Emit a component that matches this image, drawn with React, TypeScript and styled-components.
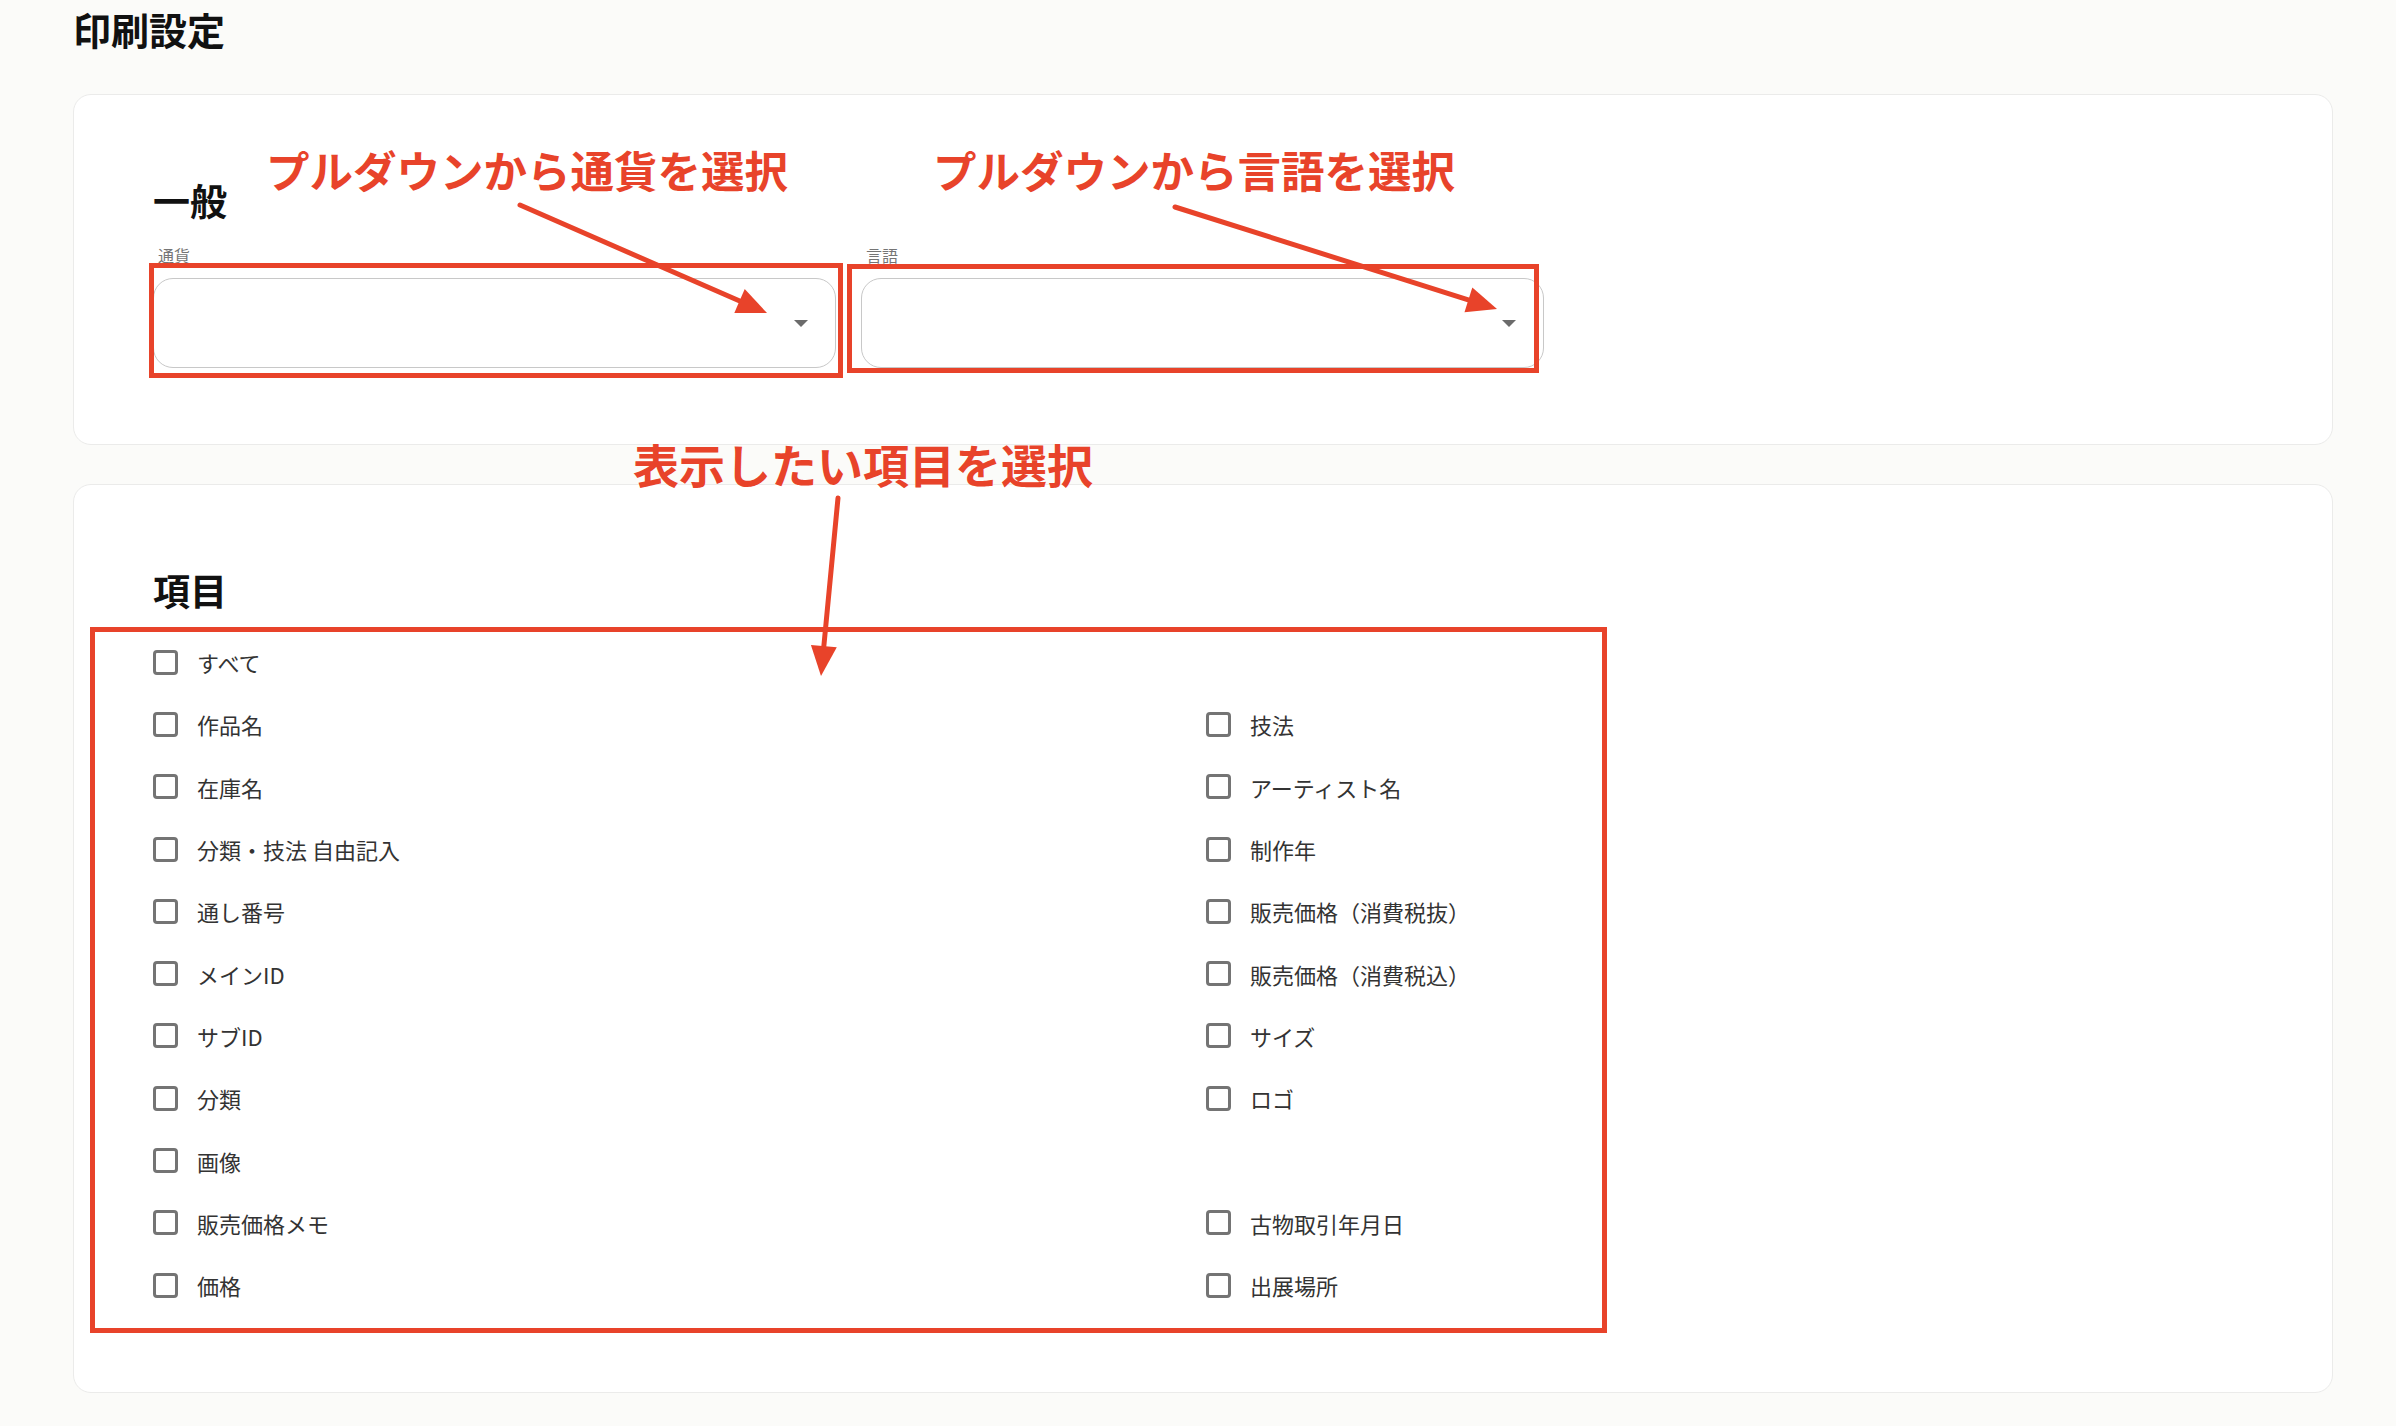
import React from "react";
import styled, { createGlobalStyle } from "styled-components";

const GlobalStyle = createGlobalStyle`
  html, body {
    margin: 0;
    padding: 0;
    background-color: #fbfbf9;
  }

  body {
    font-family: "Noto Sans CJK JP", "Noto Sans", sans-serif;
    color: #1a1a1a;
  }
`;

const Page = styled.div`
  position: relative;
  width: 100%;
  min-height: 1426px;
  box-sizing: border-box;
  padding: 7px 63px 0px 73px;
`;

const PageTitle = styled.h1`
  margin: 0px 0px 43px;
  font-size: 38px;
  line-height: 44px;
  font-weight: 700;
  color: #111111;
`;

const Card = styled.section`
  background-color: #ffffff;
  border: 1px solid #ebebea;
  border-radius: 18px;
  box-sizing: border-box;
  padding: 83px 79px 76px;
  margin-bottom: 39px;
`;

const SectionTitle = styled.h2`
  margin: 0px;
  font-size: 37px;
  line-height: 44px;
  font-weight: 700;
  color: #111111;
`;

const FieldRow = styled.div`
  display: flex;
  gap: 25px;
  margin-top: 23px;
`;

const Field = styled.div`
  width: 683px;
  display: flex;
  flex-direction: column;
`;

const FieldLabel = styled.label`
  font-size: 16px;
  line-height: 20px;
  color: #757575;
  padding-left: 5px;
  margin-bottom: 13px;
`;

const SelectBox = styled.div`
  height: 90px;
  border: 1px solid #c8c8c8;
  border-radius: 20px;
  box-sizing: border-box;
  display: flex;
  align-items: center;
  justify-content: flex-end;
  padding-right: 27px;
  background-color: #ffffff;
`;

const Caret = styled.span`
  width: 0px;
  height: 0px;
  border-left: 7px solid transparent;
  border-right: 7px solid transparent;
  border-top: 7px solid #6b6b6b;
`;

const CheckGrid = styled.div`
  display: grid;
  grid-template-columns: 1053px 1fr;
  grid-auto-rows: 62.3px;
  margin-top: 19px;
`;

const CheckItem = styled.label`
  display: flex;
  align-items: center;
  gap: 19px;
  font-size: 22px;
  color: #333333;
`;

const CheckBox = styled.span`
  width: 25px;
  height: 25px;
  box-sizing: border-box;
  border: 3px solid #747474;
  border-radius: 4px;
  flex-shrink: 0;
`;

const Overlay = styled.div`
  position: absolute;
  inset: 0px;
  pointer-events: none;
`;

const MarkBox = styled.div<{ $x: number; $y: number; $w: number; $h: number }>`
  position: absolute;
  left: ${(p) => p.$x}px;
  top: ${(p) => p.$y}px;
  width: ${(p) => p.$w}px;
  height: ${(p) => p.$h}px;
  box-sizing: border-box;
  border: 5px solid #e8432a;
`;

const MarkText = styled.div<{ $x: number; $y: number; $size: number }>`
  position: absolute;
  left: ${(p) => p.$x}px;
  top: ${(p) => p.$y}px;
  font-size: ${(p) => p.$size}px;
  line-height: 1.1;
  font-weight: 700;
  color: #e8432a;
  white-space: nowrap;
  text-shadow: 0px 0px 2px #ffffff;
`;

const ArrowLayer = styled.svg`
  position: absolute;
  left: 0px;
  top: 0px;
`;

type Arrow = { x1: number; y1: number; x2: number; y2: number };

const arrows: Arrow[] = [
  { x1: 520, y1: 205, x2: 767, y2: 313 },
  { x1: 1175, y1: 207, x2: 1497, y2: 309 },
  { x1: 838, y1: 498, x2: 821, y2: 676 },
];

const ArrowShape = ({ x1, y1, x2, y2 }: Arrow) => {
  const dx = x2 - x1;
  const dy = y2 - y1;
  const len = Math.sqrt(dx * dx + dy * dy);
  const ux = dx / len;
  const uy = dy / len;
  const headLen = 30;
  const headHalf = 13;
  const bx = x2 - ux * headLen;
  const by = y2 - uy * headLen;
  const px = -uy * headHalf;
  const py = ux * headHalf;
  const points = `${x2},${y2} ${bx + px},${by + py} ${bx - px},${by - py}`;

  return (
    <g>
      <line
        x1={x1}
        y1={y1}
        x2={bx + ux * 4}
        y2={by + uy * 4}
        stroke="#e8432a"
        strokeWidth={5}
        strokeLinecap="round"
      />
      <polygon points={points} fill="#e8432a" />
    </g>
  );
};

const leftItems = [
  "すべて",
  "作品名",
  "在庫名",
  "分類・技法 自由記入",
  "通し番号",
  "メインID",
  "サブID",
  "分類",
  "画像",
  "販売価格メモ",
  "価格",
];

const rightItems = [
  "",
  "技法",
  "アーティスト名",
  "制作年",
  "販売価格（消費税抜）",
  "販売価格（消費税込）",
  "サイズ",
  "ロゴ",
  "",
  "古物取引年月日",
  "出展場所",
];

const Check = ({ label }: { label: string }) => {
  if (!label) return <div />;
  return (
    <CheckItem>
      <CheckBox />
      {label}
    </CheckItem>
  );
};

const App = () => {
  return (
    <>
      <GlobalStyle />
      <Page>
        <PageTitle>印刷設定</PageTitle>

        <Card>
          <SectionTitle>一般</SectionTitle>
          <FieldRow>
            <Field>
              <FieldLabel>通貨</FieldLabel>
              <SelectBox>
                <Caret />
              </SelectBox>
            </Field>
            <Field>
              <FieldLabel>言語</FieldLabel>
              <SelectBox>
                <Caret />
              </SelectBox>
            </Field>
          </FieldRow>
        </Card>

        <Card>
          <SectionTitle>項目</SectionTitle>
          <CheckGrid>
            {leftItems.map((left, idx) => (
              <React.Fragment key={idx}>
                <Check label={left} />
                <Check label={rightItems[idx]} />
              </React.Fragment>
            ))}
          </CheckGrid>
        </Card>

        <Overlay>
          <MarkBox $x={149} $y={263} $w={694} $h={115} />
          <MarkBox $x={847} $y={264} $w={692} $h={109} />
          <MarkBox $x={90} $y={627} $w={1517} $h={706} />

          <MarkText $x={266} $y={146} $size={43.5}>
            プルダウンから通貨を選択
          </MarkText>
          <MarkText $x={933} $y={146} $size={43.5}>
            プルダウンから言語を選択
          </MarkText>
          <MarkText $x={633} $y={438} $size={46}>
            表示したい項目を選択
          </MarkText>

          <ArrowLayer width={2396} height={1426}>
            {arrows.map((a, idx) => (
              <ArrowShape key={idx} {...a} />
            ))}
          </ArrowLayer>
        </Overlay>
      </Page>
    </>
  );
};

export default App;
